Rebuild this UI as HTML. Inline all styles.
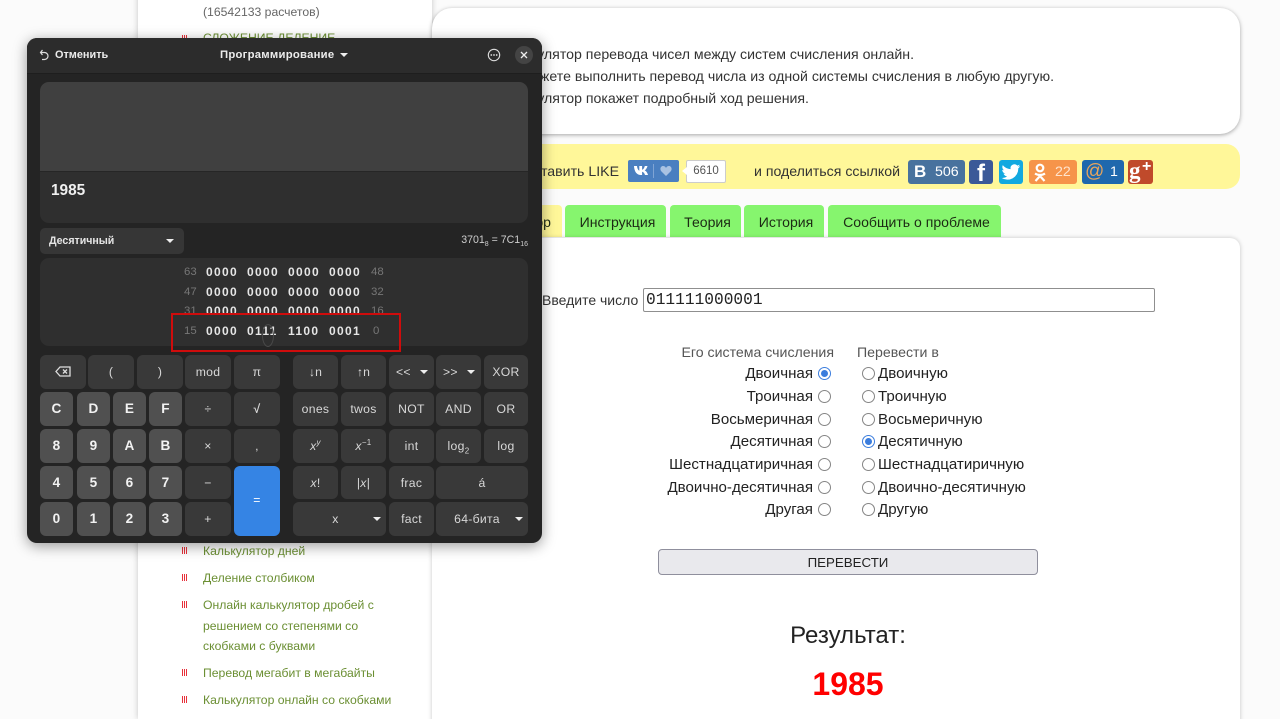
<!DOCTYPE html>
<html lang="ru"><head><meta charset="utf-8"><title>Калькулятор</title>
<style>
html,body{margin:0;padding:0;width:1280px;height:719px;overflow:hidden;background:#fbfbfb;font-family:"Liberation Sans",sans-serif}
#root{position:absolute;left:0;top:0;width:1280px;height:719px;overflow:hidden}
.a{position:absolute;white-space:nowrap}
#side{position:absolute;left:138px;top:-10px;width:294px;height:729px;background:#fff;box-shadow:0 0 6px rgba(0,0,0,.22)}
.g{color:#6b8f33;font-size:12.2px}
.bl{position:absolute;width:5px;height:7px;background:repeating-linear-gradient(90deg,#e8303a 0 1px,#fff 1px 2px)}
.pan{position:absolute;background:#fff;border-radius:20px;box-shadow:0 1px 4px rgba(0,0,0,.35)}
.t{font-size:14.15px;color:#333}
.tab{position:absolute;top:205px;height:32px;background:#86f56e;border-radius:4px 4px 0 0;text-align:center;font-size:14.05px;line-height:34px;color:#1c2a14;box-sizing:border-box;padding-left:4px}
.lbl{font-size:15.1px;color:#222;position:absolute;white-space:nowrap;line-height:18px}
.h{font-size:14.15px;color:#555}
.r{position:absolute;width:11px;height:11px;border:1.3px solid #858585;border-radius:50%;background:#fff}
.r.on{border:1.3px solid #3b7ddd}
.r.on:after{content:"";position:absolute;left:2px;top:2px;width:7px;height:7px;border-radius:50%;background:#3b7ddd}
.so{position:absolute;top:160px;height:24px;border-radius:3px;color:#fff;text-align:center;line-height:24px;font-size:14.2px}
#w{position:absolute;left:27px;top:38px;width:515px;height:505px;background:#242424;border-radius:10px;box-shadow:0 3px 14px rgba(0,0,0,.4);overflow:hidden;color:#eee}
#w .hd{position:absolute;left:0;top:0;width:515px;height:35px;background:#2c2c2c;box-shadow:0 1px 0 #1e1e1e}
#w .x{position:absolute;white-space:nowrap}
.b{position:absolute;background:#393939;border-radius:6px;text-align:center;color:#d8d8d8;font-size:12.2px;letter-spacing:.3px;box-sizing:border-box;line-height:34px;height:34px}
.n{background:#505050;color:#f2f2f2;font-weight:bold;font-size:13.6px}
.bits{font-weight:bold;font-size:12px;letter-spacing:1.32px;color:#e6e6e6}
.bits span{display:inline-block;width:41px}
.bn{font-size:11.4px;color:#777}
.car{display:inline-block;width:0;height:0;border-left:4px solid transparent;border-right:4px solid transparent;border-top:4px solid #eee;vertical-align:2px}
</style></head><body>
<div id="root">
<div id="side"></div>
<div class="a" style="left:203px;top:5px;font-size:12.2px;color:#666">(16542133 расчетов)</div>
<div class="bl" style="left:182px;top:35px"></div>
<div class="a g" style="left:203px;top:31px">СЛОЖЕНИЕ ДЕЛЕНИЕ</div>
<div class="bl" style="left:182px;top:547px"></div><div class="a g" style="left:203px;top:544px">Калькулятор дней</div>
<div class="bl" style="left:182px;top:574px"></div><div class="a g" style="left:203px;top:571px">Деление столбиком</div>
<div class="bl" style="left:182px;top:601px"></div><div class="a g" style="left:203px;top:598px">Онлайн калькулятор дробей с</div>
<div class="a g" style="left:203px;top:619px">решением со степенями со</div>
<div class="a g" style="left:203px;top:639px">скобками с буквами</div>
<div class="bl" style="left:182px;top:669px"></div><div class="a g" style="left:203px;top:666px">Перевод мегабит в мегабайты</div>
<div class="bl" style="left:182px;top:696px"></div><div class="a g" style="left:203px;top:693px">Калькулятор онлайн со скобками</div>

<div class="pan" style="left:432px;top:8px;width:808px;height:126px"></div>
<div class="a t" style="right:366px;top:46px">Онлайн калькулятор перевода чисел между систем счисления онлайн.</div>
<div class="a t" style="right:226px;top:68px">Вы можете выполнить перевод числа из одной системы счисления в любую другую.</div>
<div class="a t" style="right:471px;top:90px">Калькулятор покажет подробный ход решения.</div>

<div style="position:absolute;left:432px;top:144px;width:808px;height:45px;background:#fff799;border-radius:14px"></div>
<div class="a t" style="right:661px;top:163px">Поставить LIKE</div>
<div class="a" style="left:628px;top:160px;width:51px;height:22px;background:#4a7fc0;border-radius:2px"></div>
<svg class="a" style="left:633px;top:165px" width="17" height="11" viewBox="0 0 17 11"><path d="M0 1h3c.2 2.500 1.300 4.300 2.300 4.700V1h2.800v3.800C9.200 4.600 10.300 3 10.800 1h2.700c-.5 2.100-1.700 3.700-2.800 4.400 1.200.6 2.600 2 3.300 4.600h-3C10.500 8.200 9.400 7 8.100 6.800V10h-.9C3 10 .3 7 0 1z" fill="#fff" transform="translate(1 0)"/></svg>
<div class="a" style="left:653px;top:164px;width:1px;height:14px;background:#7fa4d4"></div>
<svg class="a" style="left:660px;top:165px" width="12" height="12" viewBox="0 0 12 12"><path d="M6 11 1 6C-.5 3.500 1 1 3 1c1.400 0 2.500.8 3 2 .5-1.200 1.600-2 3-2 2 0 3.500 2.500 2 5z" fill="#a9c2e2"/></svg>
<div class="a" style="left:686px;top:160px;width:38px;height:21px;background:#fff;border:1px solid #ccc;border-radius:2px;font-size:11.5px;color:#555;text-align:center;line-height:20px">6610</div>
<div class="a" style="left:682px;top:167px;width:0;height:0;border-top:4px solid transparent;border-bottom:4px solid transparent;border-right:5px solid #fff"></div>
<div class="a t" style="left:754px;top:163px">и поделиться ссылкой</div>

<div class="so" style="left:908px;width:57px;background:#48729e"><b style="position:absolute;left:6px;font-size:17px">В</b><span style="position:absolute;left:27px">506</span></div>
<div class="so" style="left:969px;width:24px;background:#3b5998;font-weight:bold;font-size:24px;line-height:28px">f</div>
<div class="so" style="left:999px;width:24px;background:#12a9e0"><svg width="20" height="20" viewBox="0 0 24 24" style="margin-top:2px"><path d="M23 5c-.8.4-1.700.6-2.600.7.900-.6 1.600-1.400 2-2.500-.9.500-1.900.9-2.900 1.100a4.600 4.600 0 0 0-7.900 4.200C7.800 8.300 4.400 6.500 2.200 3.700c-1.200 2.100-.6 4.800 1.400 6.200-.7 0-1.400-.2-2.100-.6 0 2.200 1.600 4.100 3.700 4.600-.7.200-1.400.2-2.100.1.600 1.900 2.300 3.200 4.300 3.200A9.300 9.300 0 0 1 .6 19.100 13 13 0 0 0 20.700 7.600c.9-.7 1.700-1.500 2.300-2.600z" fill="#fff"/></svg></div>
<div class="so" style="left:1029px;width:48px;background:#f6944a"><svg style="position:absolute;left:3px;top:3px" width="16" height="19" viewBox="0 0 16 19" fill="none" stroke="#fff" stroke-width="2.200"><circle cx="8" cy="5" r="3.300"/><path d="M3 10.500c3 2 7 2 10 0M8 12v1M8 13l-4.500 5M8 13l4.500 5"/></svg><span style="position:absolute;left:26px;color:#ffe3cc">22</span></div>
<div class="so" style="left:1082px;width:42px;background:#1f68ad"><span style="position:absolute;left:3px;top:0;font-size:19px;color:#e8a55c;line-height:23px">@</span><span style="position:absolute;left:28px">1</span></div>
<div class="so" style="left:1128px;width:25px;background:#c04a2b;font-weight:bold;font-family:'Liberation Serif',serif;font-size:23px;line-height:21px;text-align:left;text-indent:1px">g<span style="font-size:16px;position:absolute;left:13px;top:-4px;font-family:'Liberation Sans',sans-serif">+</span></div>

<div class="tab" style="left:440px;width:122px;background:#fff799"><span style="position:absolute;right:11px">Калькулятор</span></div>
<div class="tab" style="left:565px;width:101px">Инструкция</div>
<div class="tab" style="left:670px;width:71px">Теория</div>
<div class="tab" style="left:744px;width:80px">История</div>
<div class="tab" style="left:828px;width:173px">Сообщить о проблеме</div>

<div style="position:absolute;left:432px;top:238px;width:808px;height:500px;background:#fff;border-radius:10px 10px 0 0;box-shadow:0 0 5px rgba(0,0,0,.22)"></div>

<div class="lbl" style="left:542px;top:291px;color:#333;font-size:14px">Введите число</div>
<div class="a" style="left:643px;top:288px;width:510px;height:22px;border:1px solid #8f8f8f;border-radius:2px;background:#fff;font-family:'Liberation Mono',monospace;font-size:16.2px;line-height:22px;text-indent:2px;color:#222">011111000001</div>

<div class="lbl h" style="right:446px;top:343px">Его система счисления</div>
<div class="lbl h" style="left:857px;top:343px">Перевести в</div>

<div class="lbl" style="right:467px;top:365px">Двоичная</div><div class="r on" style="left:817.5px;top:366.5px"></div>
<div class="lbl" style="right:467px;top:388px">Троичная</div><div class="r" style="left:817.5px;top:389.5px"></div>
<div class="lbl" style="right:467px;top:411px">Восьмеричная</div><div class="r" style="left:817.5px;top:412.5px"></div>
<div class="lbl" style="right:467px;top:433px">Десятичная</div><div class="r" style="left:817.5px;top:434.5px"></div>
<div class="lbl" style="right:467px;top:456px">Шестнадцатиричная</div><div class="r" style="left:817.5px;top:457.5px"></div>
<div class="lbl" style="right:467px;top:479px">Двоично-десятичная</div><div class="r" style="left:817.5px;top:480.5px"></div>
<div class="lbl" style="right:467px;top:501px">Другая</div><div class="r" style="left:817.5px;top:502.5px"></div>

<div class="r" style="left:861.5px;top:366.5px"></div><div class="lbl" style="left:878px;top:365px">Двоичную</div>
<div class="r" style="left:861.5px;top:389.5px"></div><div class="lbl" style="left:878px;top:388px">Троичную</div>
<div class="r" style="left:861.5px;top:412.5px"></div><div class="lbl" style="left:878px;top:411px">Восьмеричную</div>
<div class="r on" style="left:861.5px;top:434.5px"></div><div class="lbl" style="left:878px;top:433px">Десятичную</div>
<div class="r" style="left:861.5px;top:457.5px"></div><div class="lbl" style="left:878px;top:456px">Шестнадцатиричную</div>
<div class="r" style="left:861.5px;top:480.5px"></div><div class="lbl" style="left:878px;top:479px">Двоично-десятичную</div>
<div class="r" style="left:861.5px;top:502.5px"></div><div class="lbl" style="left:878px;top:501px">Другую</div>

<div class="a" style="left:658px;top:549px;width:378px;height:24px;background:#e9e9ed;border:1px solid #8f8f9d;border-radius:4px;text-align:center;font-size:13.3px;line-height:25px;color:#222">ПЕРЕВЕСТИ</div>
<div class="a" style="left:648px;width:400px;top:622px;text-align:center;font-size:24px;color:#222;line-height:28px">Результат:</div>
<div class="a" style="left:648px;width:400px;top:666px;text-align:center;font-size:32px;font-weight:bold;color:#f00;line-height:37px">1985</div>

<div id="w">
<div class="hd"></div>
<svg class="x" style="left:12px;top:11px" width="11" height="13" viewBox="0 0 11 13" fill="none" stroke="#ddd" stroke-width="1.2"><path d="M1.500 3.500h4a3.500 3.500 0 0 1 0 7H3M3.500 1 1.500 3.500 3.500 6"/></svg>
<div class="x" style="left:28px;top:11px;font-size:10.9px;font-weight:bold;color:#ececec">Отменить</div>
<div class="x" style="left:193px;top:11px;font-size:11.3px;font-weight:bold;letter-spacing:.25px;color:#ececec">Программирование</div>
<span class="car x" style="left:313px;top:15px"></span>
<svg class="x" style="left:460px;top:10px" width="14" height="14" viewBox="0 0 14 14"><circle cx="7" cy="7" r="5.7" fill="none" stroke="#ddd" stroke-width="1.1"/><circle cx="4.300" cy="7" r=".9" fill="#ddd"/><circle cx="7" cy="7" r=".9" fill="#ddd"/><circle cx="9.700" cy="7" r=".9" fill="#ddd"/></svg>
<div class="x" style="left:488px;top:8px;width:18px;height:18px;border-radius:50%;background:#444"></div>
<svg class="x" style="left:493px;top:13px" width="8" height="8" viewBox="0 0 8 8" stroke="#eee" stroke-width="1.3"><path d="M1 1l6 6M7 1 1 7"/></svg>

<div class="x" style="left:13px;top:44px;width:488px;height:141px;border-radius:9px;background:#2f2f2f;overflow:hidden"><div style="height:89px;background:#404040;box-shadow:0 1px 0 #262626"></div></div>
<div class="x" style="left:24px;top:144px;font-size:15.4px;font-weight:bold;color:#f0f0f0">1985</div>

<div class="x" style="left:13px;top:190px;width:144px;height:26px;background:#363636;border-radius:5px"></div>
<div class="x" style="left:22px;top:197px;font-size:10.6px;font-weight:bold;color:#e6e6e6">Десятичный</div>
<div class="x" style="left:139px;top:201px"><span class="car" style="display:block"></span></div>
<div class="x" style="right:14px;top:196px;font-size:10.6px;color:#cfcfcf">3701<sub style="font-size:7px">8</sub> = 7C1<sub style="font-size:7px">16</sub></div>

<div class="x" style="left:13px;top:220px;width:488px;height:88px;background:#2f2f2f;border-radius:9px"></div>
<div class="x bn" style="left:157px;top:228px">63</div><div class="x bits" style="left:179px;top:227px"><span>0000</span><span>0000</span><span>0000</span><span>0000</span></div><div class="x bn" style="left:344px;top:228px">48</div>
<div class="x bn" style="left:157px;top:248px">47</div><div class="x bits" style="left:179px;top:247px"><span>0000</span><span>0000</span><span>0000</span><span>0000</span></div><div class="x bn" style="left:344px;top:248px">32</div>
<div class="x bn" style="left:157px;top:267px">31</div><div class="x bits" style="left:179px;top:266px"><span>0000</span><span>0000</span><span>0000</span><span>0000</span></div><div class="x bn" style="left:344px;top:267px">16</div>
<div class="x" style="left:144px;top:275px;width:230px;height:33px;background:#2f2f2f"></div>
<div class="x bn" style="left:157px;top:287px">15</div><div class="x bits" style="left:179px;top:286px"><span>0000</span><span>0111</span><span>1100</span><span>0001</span></div><div class="x bn" style="left:346px;top:287px">0</div>
<div class="x" style="left:235px;top:286px;width:10px;height:21px;border:1px solid #4a4a4a;border-radius:50%"></div>
<div class="x" style="left:144px;top:275px;width:226px;height:35px;border:2px solid #cf0c0c"></div>

<div class="b" style="left:13px;top:317px;width:46px"><svg width="16" height="11" viewBox="0 0 16 11" fill="none" stroke="#ddd" stroke-width="1.3" style="vertical-align:-1px"><path d="M5 1h10v9H5L1 5.500zM8 3.500l4 4M12 3.500l-4 4"/></svg></div>
<div class="b" style="left:61px;top:317px;width:46px">(</div>
<div class="b" style="left:110px;top:317px;width:46px">)</div>
<div class="b" style="left:158px;top:317px;width:46px">mod</div>
<div class="b" style="left:207px;top:317px;width:46px">π</div>
<div class="b" style="left:266px;top:317px;width:45px">↓n</div>
<div class="b" style="left:314px;top:317px;width:45px">↑n</div>
<div class="b" style="left:362px;top:317px;width:45px;text-align:left;padding-left:7px">&lt;&lt;<span class="car" style="position:absolute;left:31px;top:15px"></span></div>
<div class="b" style="left:409px;top:317px;width:45px;text-align:left;padding-left:7px">&gt;&gt;<span class="car" style="position:absolute;left:31px;top:15px"></span></div>
<div class="b" style="left:457px;top:317px;width:44px">XOR</div>

<div class="b n" style="left:13px;top:354px;width:33px">C</div>
<div class="b n" style="left:50px;top:354px;width:33px">D</div>
<div class="b n" style="left:86px;top:354px;width:33px">E</div>
<div class="b n" style="left:122px;top:354px;width:33px">F</div>
<div class="b" style="left:158px;top:354px;width:46px">÷</div>
<div class="b" style="left:207px;top:354px;width:46px;font-weight:bold">√</div>
<div class="b" style="left:266px;top:354px;width:45px">ones</div>
<div class="b" style="left:314px;top:354px;width:45px">twos</div>
<div class="b" style="left:362px;top:354px;width:45px">NOT</div>
<div class="b" style="left:409px;top:354px;width:45px">AND</div>
<div class="b" style="left:457px;top:354px;width:44px">OR</div>

<div class="b n" style="left:13px;top:391px;width:33px">8</div>
<div class="b n" style="left:50px;top:391px;width:33px">9</div>
<div class="b n" style="left:86px;top:391px;width:33px">A</div>
<div class="b n" style="left:122px;top:391px;width:33px">B</div>
<div class="b" style="left:158px;top:391px;width:46px">×</div>
<div class="b" style="left:207px;top:391px;width:46px">,</div>
<div class="b" style="left:266px;top:391px;width:45px"><i>x<sup style="font-size:8px;line-height:0">y</sup></i></div>
<div class="b" style="left:314px;top:391px;width:45px"><i>x</i><sup style="font-size:8px;line-height:0">−1</sup></div>
<div class="b" style="left:362px;top:391px;width:45px">int</div>
<div class="b" style="left:409px;top:391px;width:45px">log<sub style="font-size:8px;line-height:0">2</sub></div>
<div class="b" style="left:457px;top:391px;width:44px">log</div>

<div class="b n" style="left:13px;top:428px;width:33px;height:33px">4</div>
<div class="b n" style="left:50px;top:428px;width:33px;height:33px">5</div>
<div class="b n" style="left:86px;top:428px;width:33px;height:33px">6</div>
<div class="b n" style="left:122px;top:428px;width:33px;height:33px">7</div>
<div class="b" style="left:158px;top:428px;width:46px;height:33px">−</div>
<div class="b" style="left:207px;top:428px;width:46px;height:70px;line-height:69px;background:#3584e4;color:#fff">=</div>
<div class="b" style="left:266px;top:428px;width:45px;height:33px"><i>x</i>!</div>
<div class="b" style="left:314px;top:428px;width:45px;height:33px">|<i>x</i>|</div>
<div class="b" style="left:362px;top:428px;width:45px;height:33px">frac</div>
<div class="b" style="left:409px;top:428px;width:92px;height:33px">á</div>

<div class="b n" style="left:13px;top:464px;width:33px">0</div>
<div class="b n" style="left:50px;top:464px;width:33px">1</div>
<div class="b n" style="left:86px;top:464px;width:33px">2</div>
<div class="b n" style="left:122px;top:464px;width:33px">3</div>
<div class="b" style="left:158px;top:464px;width:46px">+</div>
<div class="b" style="left:266px;top:464px;width:93px;padding-right:8px">x<span class="car" style="position:absolute;left:80px;top:15px"></span></div>
<div class="b" style="left:362px;top:464px;width:45px">fact</div>
<div class="b" style="left:409px;top:464px;width:92px;padding-right:10px">64-бита<span class="car" style="position:absolute;left:79px;top:15px"></span></div>
</div>
</div>
</body></html>
